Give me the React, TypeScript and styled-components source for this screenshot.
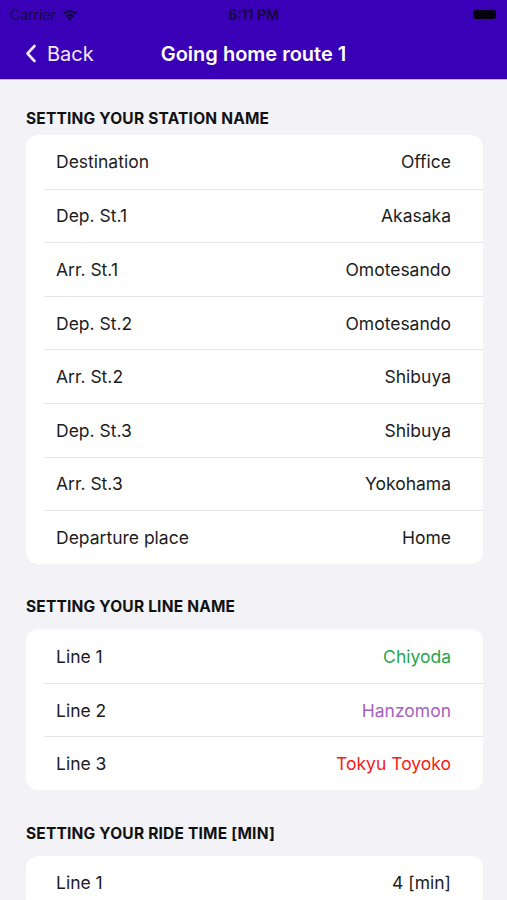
import React from 'react';
import styled, {createGlobalStyle} from 'styled-components';

const navColor = '#3a00b8';
const pageBg = '#f2f2f7';
const textColor = '#1c1c1e';

const GlobalStyle = createGlobalStyle`
    html, body {
        margin: 0;
        padding: 0;
        background: ${pageBg};
        font-family: Inter, "Noto Sans", "Liberation Sans", sans-serif;
        -webkit-font-smoothing: antialiased;
    }
    * { box-sizing: border-box; }
`

const Screen = styled.div`
    width: 507px;
    height: 900px;
    background: ${pageBg};
    overflow: hidden;
`

const Header = styled.header`
    background: ${navColor};
    border-bottom: 1px solid #c6b2f5;
`

const StatusBar = styled.div`
    height: 28px;
    display: grid;
    grid-template-columns: 1fr auto 1fr;
    align-items: center;
    padding: 0 10px;
    color: #14083a;
    font-size: 14px;
`

const Carrier = styled.div`
    display: flex;
    align-items: center;
    gap: 5px;
`

const Clock = styled.div`
    font-weight: 600;
`

const Battery = styled.div`
    justify-self: end;
    width: 23px;
    height: 9px;
    margin-right: 1px;
    border-radius: 3px;
    background: #050210;
`

const NavBar = styled.div`
    height: 51px;
    display: grid;
    grid-template-columns: 1fr auto 1fr;
    align-items: center;
`

const BackButton = styled.button`
    display: flex;
    align-items: center;
    gap: 10px;
    margin-left: 25px;
    background: none;
    border: none;
    padding: 0;
    color: #f1eaff;
    font-family: inherit;
    font-size: 20px;
    justify-self: start;
`

const Title = styled.h1`
    margin: 0;
    color: #ffffff;
    font-size: 20px;
    font-weight: 600;
`

const Content = styled.main`
    padding: 30px 24px 0 26px;
`

const Section = styled.section`
    & + & {
        margin-top: 34.5px;
    }
`

const SectionTitle = styled.h2`
    margin: 0 0 13px;
    font-size: 15.5px;
    line-height: 18px;
    font-weight: 700;
    color: #111;
    letter-spacing: 0.2px;

    ${Section}:first-child & {
        margin-bottom: 7px;
    }
`

const Card = styled.div`
    background: #fff;
    border-radius: 12px;
    overflow: hidden;
`

const Row = styled.div`
    padding-left: 18px;
    & + & > div {
        border-top: 1px solid #e6e6ea;
    }
`

const RowInner = styled.div`
    height: 53.6px;
    display: flex;
    align-items: center;
    justify-content: space-between;
    padding: 0 32px 0 12px;
    font-size: 17.5px;
    color: ${textColor};
`

const Value = styled.span<{ $color?: string }>`
    color: ${p => p.$color || textColor};
`

type Item = { label: string; value: string; color?: string };

const stations: Item[] = [
    {label: 'Destination', value: 'Office'},
    {label: 'Dep. St.1', value: 'Akasaka'},
    {label: 'Arr. St.1', value: 'Omotesando'},
    {label: 'Dep. St.2', value: 'Omotesando'},
    {label: 'Arr. St.2', value: 'Shibuya'},
    {label: 'Dep. St.3', value: 'Shibuya'},
    {label: 'Arr. St.3', value: 'Yokohama'},
    {label: 'Departure place', value: 'Home'},
];

const lines: Item[] = [
    {label: 'Line 1', value: 'Chiyoda', color: '#1fa64d'},
    {label: 'Line 2', value: 'Hanzomon', color: '#a563bd'},
    {label: 'Line 3', value: 'Tokyu Toyoko', color: '#fb1a16'},
];

const times: Item[] = [
    {label: 'Line 1', value: '4 [min]'},
];

const Group = ({title, items}: { title: string; items: Item[] }) => (
    <Section>
        <SectionTitle>{title}</SectionTitle>
        <Card>
            {items.map(item => (
                <Row key={item.label}>
                    <RowInner>
                        <span>{item.label}</span>
                        <Value $color={item.color}>{item.value}</Value>
                    </RowInner>
                </Row>
            ))}
        </Card>
    </Section>
);

const App = () => {
    return (
        <Screen>
            <GlobalStyle/>
            <Header>
                <StatusBar>
                    <Carrier>
                        Carrier
                        <svg width="18" height="13" viewBox="0 0 18 13">
                            <path d="M9 12.5 L6.6 9.9 a3.6 3.6 0 0 1 4.8 0 Z" fill="#0d0630"/>
                            <path d="M4.6 7.8 a6.6 6.6 0 0 1 8.8 0 l-1.45 1.5 a4.5 4.5 0 0 0 -5.9 0 Z" fill="#0d0630"/>
                            <path d="M1.9 5 a10.4 10.4 0 0 1 14.2 0 l-1.5 1.55 a8.2 8.2 0 0 0 -11.2 0 Z" fill="#0d0630"/>
                        </svg>
                    </Carrier>
                    <Clock>6:11 PM</Clock>
                    <Battery/>
                </StatusBar>
                <NavBar>
                    <BackButton>
                        <svg width="12" height="19" viewBox="0 0 12 19">
                            <path d="M9.5 2 L2.5 9.5 L9.5 17" fill="none" stroke="#f1eaff" strokeWidth="2.6"
                                  strokeLinecap="round" strokeLinejoin="round"/>
                        </svg>
                        Back
                    </BackButton>
                    <Title>Going home route 1</Title>
                    <span/>
                </NavBar>
            </Header>
            <Content>
                <Group title="SETTING YOUR STATION NAME" items={stations}/>
                <Group title="SETTING YOUR LINE NAME" items={lines}/>
                <Group title="SETTING YOUR RIDE TIME [MIN]" items={times}/>
            </Content>
        </Screen>
    );
};

export default App;
